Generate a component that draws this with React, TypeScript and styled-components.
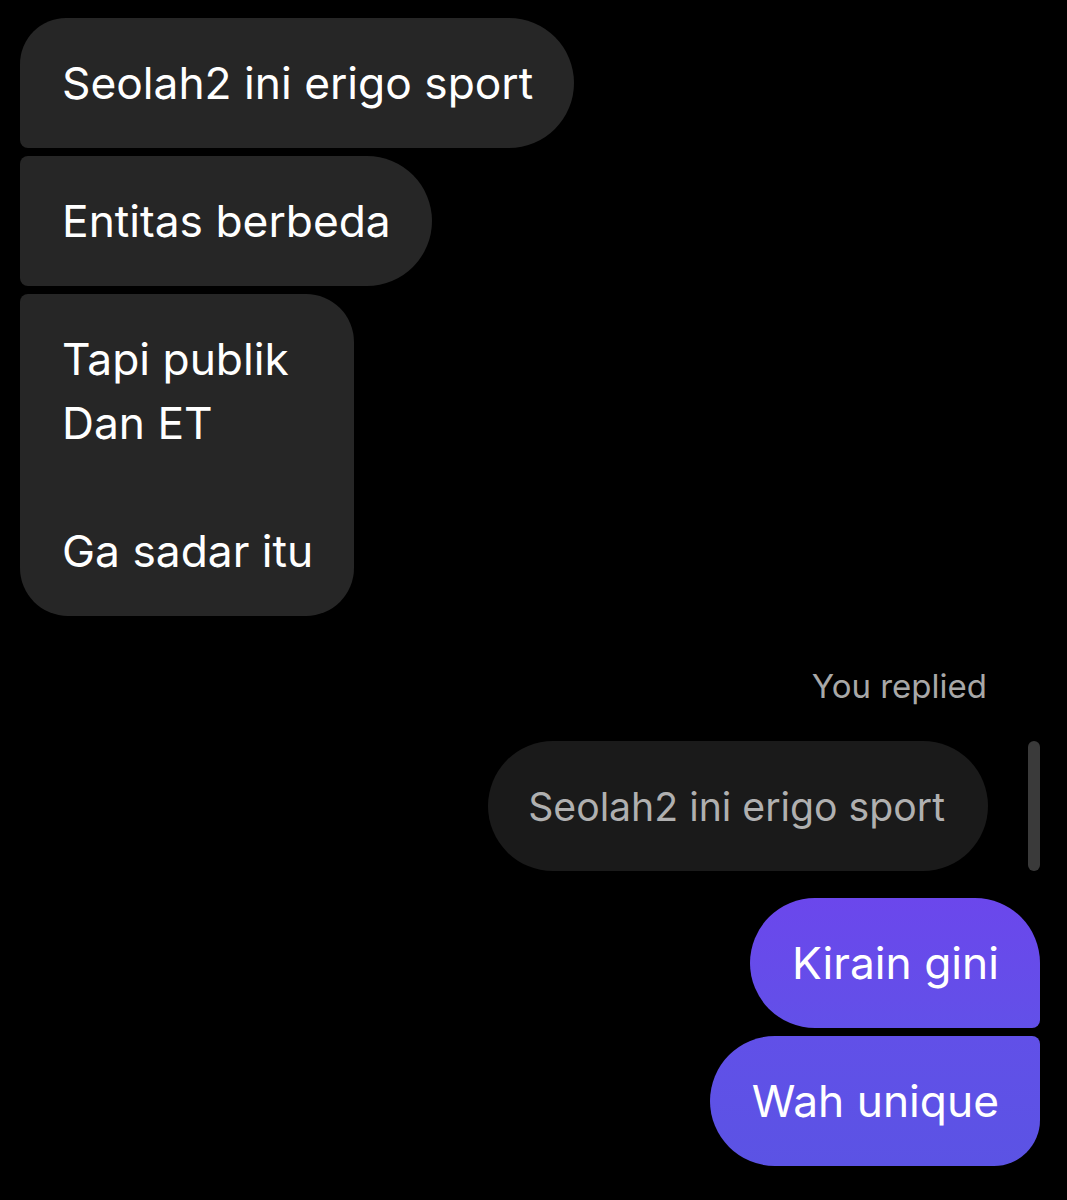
import React from "react";
import styled, { createGlobalStyle, css } from "styled-components";

const Global = createGlobalStyle`
  html, body {
    margin: 0;
    padding: 0;
    background: #000;
  }
  body {
    font-family: Inter, "Noto Sans", "Liberation Sans", sans-serif;
    -webkit-font-smoothing: antialiased;
  }
`;

const Page = styled.div`
  width: 1067px;
  height: 1200px;
  box-sizing: border-box;
  background: #000;
  padding: 18px 27px 0 20px;
  display: flex;
  flex-direction: column;
  overflow: hidden;
`;

const Group = styled.div<{ $side: "left" | "right" }>`
  display: flex;
  flex-direction: column;
  gap: 8px;
  align-items: ${(p) => (p.$side === "left" ? "flex-start" : "flex-end")};
`;

type Corners = [number, number, number, number];

const Bubble = styled.div<{ $mine?: boolean; $r: Corners }>`
  box-sizing: border-box;
  min-height: 130px;
  padding: 33px 41px 33px 42px;
  font-size: 44.3px;
  line-height: 64px;
  color: #fff;
  white-space: pre-line;
  border-radius: ${(p) => p.$r.map((v) => `${v}px`).join(" ")};
  ${(p) =>
    p.$mine
      ? css`
          background: #6348ea;
        `
      : css`
          background: #262626;
        `}
`;

const ReplyLabel = styled.div`
  margin-top: 50px;
  margin-right: 53px;
  align-self: flex-end;
  font-size: 33px;
  line-height: 40px;
  color: #a8a8a8;
`;

const ReplyRow = styled.div`
  margin-top: 35px;
  display: flex;
  justify-content: flex-end;
  align-items: stretch;
  gap: 40px;
`;

const QuotedBubble = styled.div`
  box-sizing: border-box;
  height: 130px;
  padding: 0 43px 0 40px;
  display: flex;
  align-items: center;
  border-radius: 65px;
  background: #1a1a1a;
  color: #b0b0b0;
  font-size: 39.2px;
`;

const QuoteBar = styled.div`
  width: 12px;
  border-radius: 6px;
  background: #3a3a3a;
`;

const MineGroup = styled(Group)`
  margin-top: 27px;
`;

export default function App() {
  return (
    <Page>
      <Global />
      <Group $side="left">
        <Bubble $r={[46, 65, 65, 8]}>Seolah2 ini erigo sport</Bubble>
        <Bubble $r={[8, 65, 65, 8]}>Entitas berbeda</Bubble>
        <Bubble $r={[8, 48, 48, 48]}>{"Tapi publik\nDan ET\n\nGa sadar itu"}</Bubble>
      </Group>
      <ReplyLabel>You replied</ReplyLabel>
      <ReplyRow>
        <QuotedBubble>Seolah2 ini erigo sport</QuotedBubble>
        <QuoteBar />
      </ReplyRow>
      <MineGroup $side="right">
        <Bubble $mine $r={[65, 65, 8, 65]} style={{ background: "linear-gradient(180deg, #6b47ec 0%, #6250e8 100%)" }}>
          Kirain gini
        </Bubble>
        <Bubble $mine $r={[65, 8, 46, 65]} style={{ background: "linear-gradient(180deg, #6150e8 0%, #5b53e4 100%)" }}>
          Wah unique
        </Bubble>
      </MineGroup>
    </Page>
  );
}
